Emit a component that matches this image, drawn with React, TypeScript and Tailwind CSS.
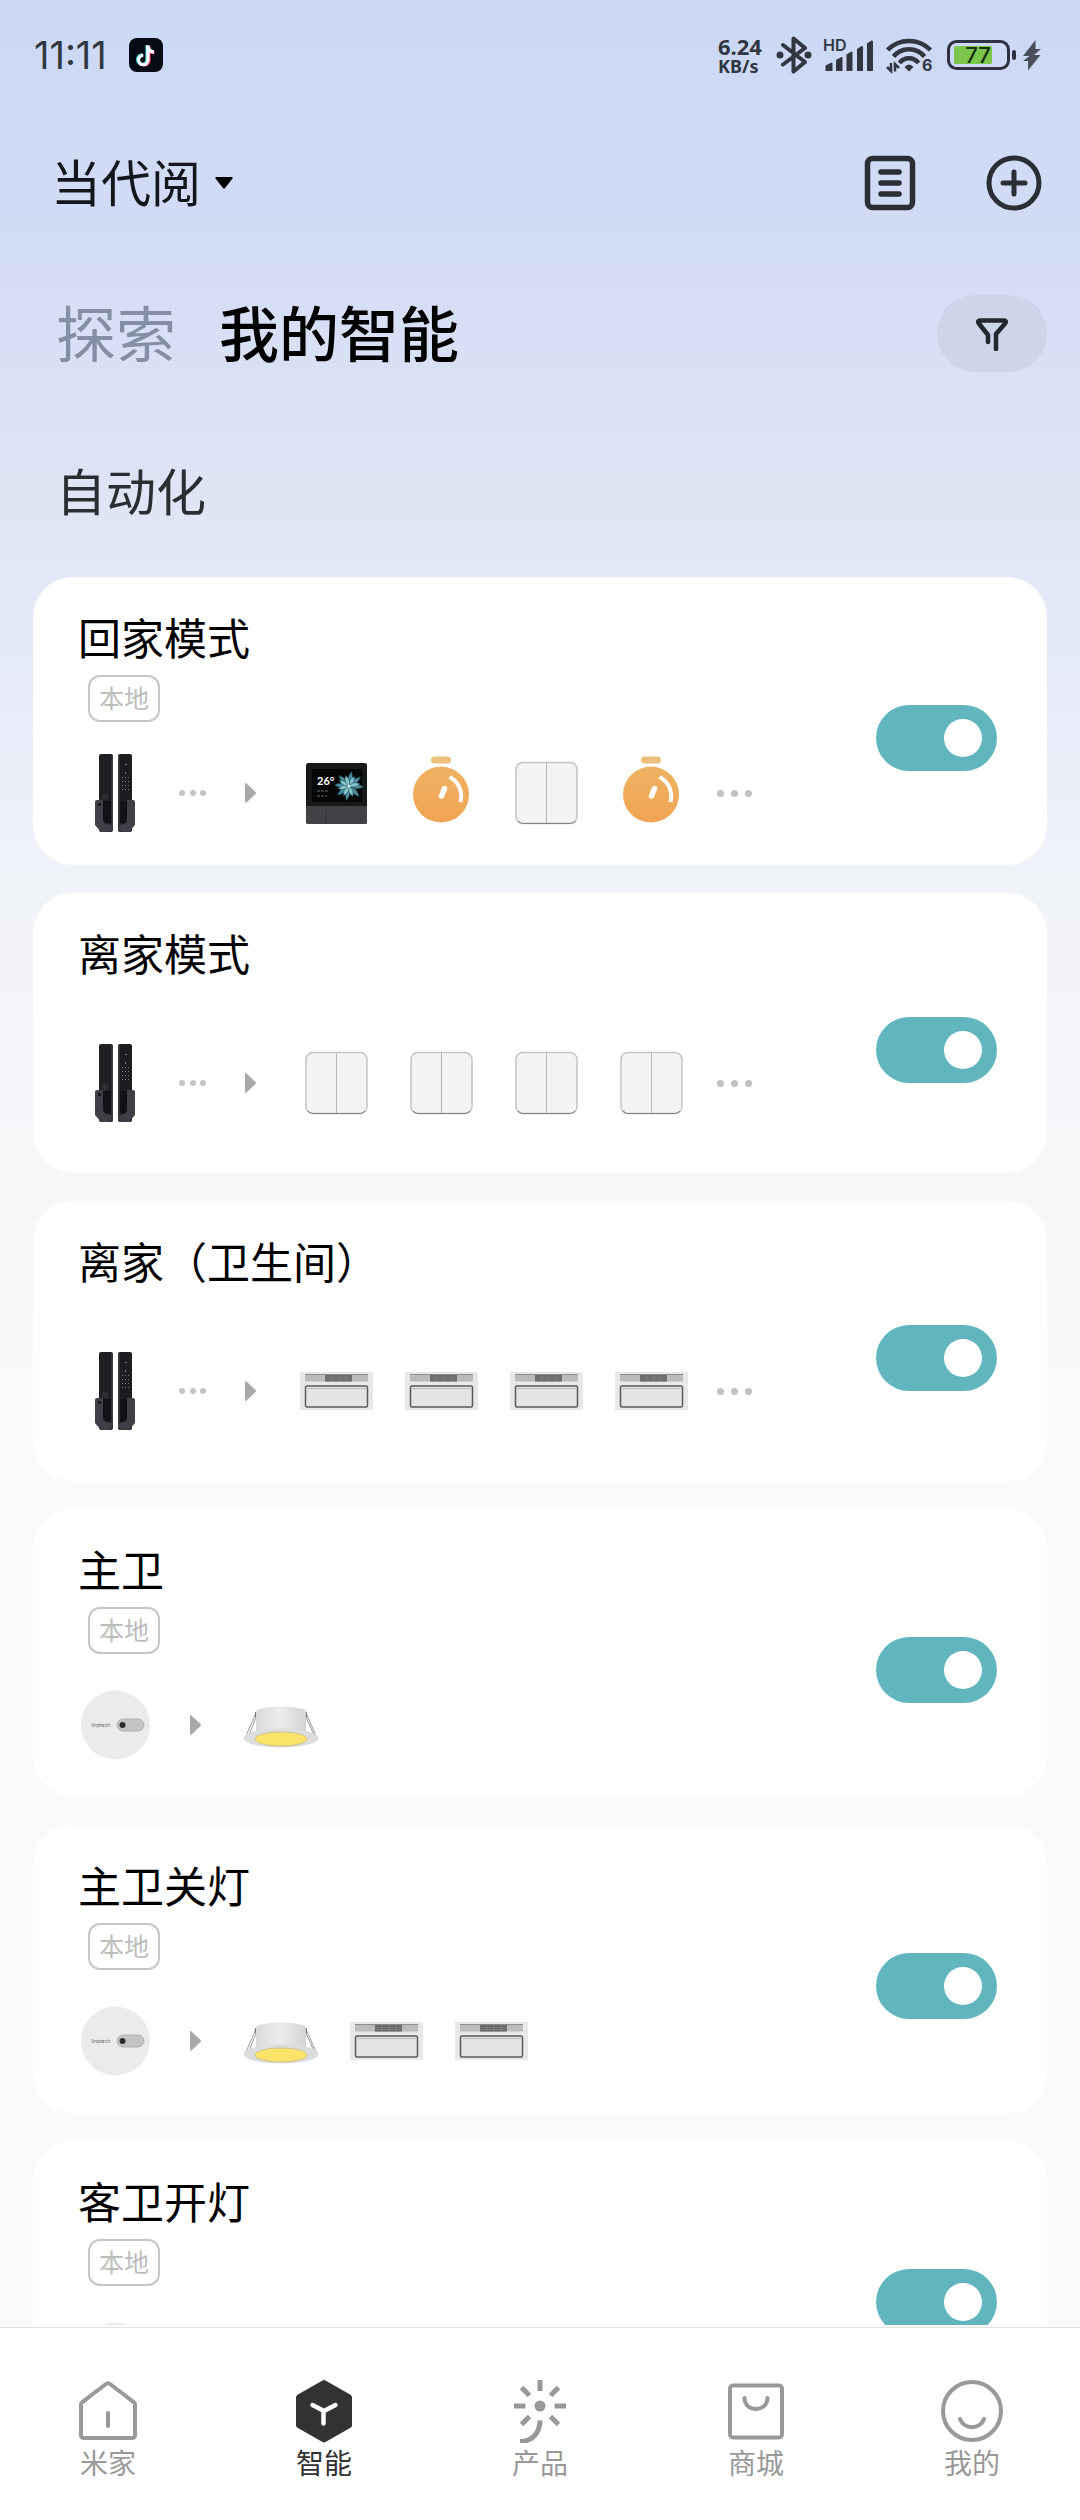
import type { ReactNode } from "react";

type Device = "lock" | "panel" | "timer" | "switch" | "fan" | "sensor" | "lamp";

interface Automation {
  name: string;
  local: boolean;
  trigger: Device;
  moreTriggers: boolean;
  actions: Device[];
  moreActions: boolean;
}

const automations: Automation[] = [
  { name: "回家模式", local: true, trigger: "lock", moreTriggers: true, actions: ["panel", "timer", "switch", "timer"], moreActions: true },
  { name: "离家模式", local: false, trigger: "lock", moreTriggers: true, actions: ["switch", "switch", "switch", "switch"], moreActions: true },
  { name: "离家（卫生间）", local: false, trigger: "lock", moreTriggers: true, actions: ["fan", "fan", "fan", "fan"], moreActions: true },
  { name: "主卫", local: true, trigger: "sensor", moreTriggers: false, actions: ["lamp"], moreActions: false },
  { name: "主卫关灯", local: true, trigger: "sensor", moreTriggers: false, actions: ["lamp", "fan", "fan"], moreActions: false },
  { name: "客卫开灯", local: true, trigger: "sensor", moreTriggers: false, actions: ["lamp"], moreActions: false },
];

function Frame({ children }: { children: ReactNode }) {
  return (
    <svg viewBox="0 0 84 84" className="size-[84px] shrink-0" aria-hidden="true">
      {children}
    </svg>
  );
}

function LockIcon() {
  return (
    <Frame>
      <rect x="26" y="3" width="14" height="78" rx="2" fill="#1f2024" />
      <rect x="38.4" y="4" width="1.6" height="76" fill="#3b3c42" />
      <rect x="45" y="3" width="14" height="78" rx="2" fill="#1c1d21" />
      <rect x="45" y="4" width="1.6" height="76" fill="#3b3c42" />
      <circle cx="32" cy="46" r="3" fill="#303136" />
      <path d="M24 49h6v20c0 2 1 3 3 4l6 1v4l-3 3h-8l-6-7V51a2 2 0 0 1 2-2z" fill="#3f4047" />
      <path d="M30 50h8v22h-5l-3-3z" fill="#111215" />
      <circle cx="26.5" cy="53.500" r="1.500" fill="#0c0c0e" />
      <path d="M60 49h-6v20c0 2-1 3-3 4l-5 1v4l2 3h8l6-7V51a2 2 0 0 0-2-2z" fill="#3f4047" />
      <path d="M47 50h7v19l-3 3h-4z" fill="#111215" />
      <g fill="#777980">
        <rect x="52" y="13" width="2" height="1" />
        <rect x="52" y="21" width="1" height="2" />
        {[26, 30, 34, 38].map((y) => (
          <g key={y}>
            <rect x="49" y={y} width="1" height="1" />
            <rect x="52" y={y} width="1" height="1" />
            <rect x="55" y={y} width="1" height="1" />
          </g>
        ))}
      </g>
    </Frame>
  );
}

function PanelIcon() {
  const outer = [10, 52, 94, 136, 190, 232, 274, 316];
  const inner = [30, 78, 160, 210, 256, 300, 342];
  return (
    <Frame>
      <rect x="12" y="12" width="61" height="61" rx="2.500" fill="#17181a" />
      <path d="M12 55h61v15.500a2.500 2.500 0 0 1-2.500 2.500h-56a2.500 2.500 0 0 1-2.500-2.500z" fill="#414246" />
      <path d="M32 56v16" stroke="#333438" strokeWidth="1" />
      <rect x="18" y="18" width="50" height="33" fill="#050607" />
      <g transform="translate(55 35)">
        {outer.map((a) => (
          <path key={a} d="M0 0C-3.500-5-3-9 0-15C3-9 3.500-5 0 0z" fill="#4b8d9d" stroke="#10242b" strokeWidth=".6" transform={`rotate(${a})`} />
        ))}
        {inner.map((a) => (
          <path key={a} d="M0 0C-3-4-2.500-7 0-11C2.500-7 3-4 0 0z" fill="#86c6cf" stroke="#1f4650" strokeWidth=".6" transform={`rotate(${a})`} />
        ))}
        <circle r="1.500" fill="#d5f2f2" />
      </g>
      <text x="23" y="34" fontSize="11" fontWeight="700" fontFamily="Lato, sans-serif" fill="#ffffff">26°</text>
      <path d="M23 40h11M23 45h10" stroke="#44474b" strokeWidth="1.500" strokeDasharray="3 1" />
    </Frame>
  );
}

function TimerIcon() {
  return (
    <Frame>
      <defs>
        <linearGradient id="timer-face" x1="0" y1="0" x2="0" y2="1">
          <stop offset="0" stopColor="#efb362" />
          <stop offset="1" stopColor="#f0a353" />
        </linearGradient>
      </defs>
      <rect x="32" y="5.500" width="20" height="7" rx="3.500" fill="#ecc07c" />
      <circle cx="42" cy="43.500" r="28" fill="url(#timer-face)" />
      <path d="M42.500 45L45.500 37.500" stroke="#ffffff" strokeWidth="5.500" strokeLinecap="round" />
      <path d="M50.500 26C59.500 30.500 64 40.500 61.500 51" fill="none" stroke="#ffffff" strokeWidth="4" />
    </Frame>
  );
}

function SwitchIcon() {
  return (
    <Frame>
      <rect x="12" y="11.500" width="61" height="61" rx="7" fill="#f4f4f4" stroke="#c4c4c4" strokeWidth="1.500" />
      <path d="M14 70q2 2.500 5 2.500h47q3 0 5-2.500" fill="none" stroke="#808080" strokeWidth="1.200" />
      <path d="M42.500 12v60" stroke="#b5b5b5" strokeWidth="1" />
    </Frame>
  );
}

function FanIcon() {
  return (
    <Frame>
      <rect x="6" y="23" width="73" height="38" fill="#e8e8e8" />
      <rect x="11" y="25.500" width="63" height="7" fill="#b9bbbd" />
      <path d="M11 25.500h63" stroke="#8c8e90" strokeWidth="1" />
      <rect x="31" y="26" width="27" height="6.500" fill="#626466" />
      <path d="M31 28.200h27M31 30.400h27M38 26v6.500M45 26v6.500M52 26v6.500" stroke="#8c8e90" strokeWidth=".6" />
      <rect x="11.500" y="37" width="62" height="21" rx="1.500" fill="#e4e4e4" stroke="#585a5c" strokeWidth="1.500" />
      <path d="M13 39.500h59" stroke="#bcbcbc" strokeWidth="1" />
    </Frame>
  );
}

function SensorIcon() {
  return (
    <Frame>
      <circle cx="42.500" cy="42" r="34.500" fill="#ebebeb" />
      <rect x="44" y="36" width="27" height="12" rx="6" fill="#c4c4c4" stroke="#b0b0b0" strokeWidth="1" />
      <circle cx="49.500" cy="42" r="3" fill="#2c2c2e" />
      <text x="18.500" y="43.500" fontSize="5" fontFamily="Inter, sans-serif" fill="#6a6a6a">linptech</text>
    </Frame>
  );
}

function LampIcon() {
  return (
    <Frame>
      <defs>
        <linearGradient id="lamp-body" x1="0" y1="0" x2="1" y2="0">
          <stop offset="0" stopColor="#dadada" />
          <stop offset=".5" stopColor="#ececec" />
          <stop offset="1" stopColor="#d3d3d3" />
        </linearGradient>
      </defs>
      <path d="M17 30L6 55M18 32L10 52M67 30L78 55M66 32L75 52" stroke="#9b9b9b" strokeWidth="1" />
      <path d="M17 29v5M67 29v5" stroke="#777" strokeWidth="2" />
      <path d="M17 28C22 22 62 22 67 28V48H17z" fill="url(#lamp-body)" />
      <ellipse cx="42" cy="55" rx="37.500" ry="9.500" fill="#dcdcdc" />
      <ellipse cx="42" cy="56" rx="26" ry="7" fill="#fbe36a" stroke="#c9bd83" strokeWidth=".8" />
    </Frame>
  );
}

function DeviceIcon({ kind }: { kind: Device }) {
  switch (kind) {
    case "lock":
      return <LockIcon />;
    case "panel":
      return <PanelIcon />;
    case "timer":
      return <TimerIcon />;
    case "switch":
      return <SwitchIcon />;
    case "fan":
      return <FanIcon />;
    case "sensor":
      return <SensorIcon />;
    case "lamp":
      return <LampIcon />;
  }
}

function AutomationCard({ item }: { item: Automation }) {
  return (
    <li className="flex items-center justify-between rounded-[40px] bg-white pr-[50px] pl-10">
      <div className={item.local ? "pt-[31px] pb-[30px]" : "pt-[31px] pb-12"}>
        <h3 className="pl-[5px] text-[43px] leading-[56px] font-normal text-black">{item.name}</h3>
        {item.local && (
          <span className="mt-[11px] ml-[15px] flex h-[47px] w-[72px] items-center justify-center rounded-xl border-2 border-[#c6c6c6] pb-[2px] text-[25px] leading-none text-[#bdbdbd]">
            本地
          </span>
        )}
        <div className={item.local ? "mt-[29px] flex items-center" : "mt-[61px] flex items-center"}>
          <DeviceIcon kind={item.trigger} />
          {item.moreTriggers && (
            <span className="mr-[6px] ml-[22px] flex w-[27px] justify-between">
              <i className="size-[6px] rounded-full bg-[#c4c4c4]" />
              <i className="size-[6px] rounded-full bg-[#c4c4c4]" />
              <i className="size-[6px] rounded-full bg-[#c4c4c4]" />
            </span>
          )}
          <svg viewBox="0 0 11 20" className="mr-[38px] ml-[33px] h-5 w-[11px]" aria-hidden="true">
            <path d="M0 1Q0-.500 1.500.500L10.500 9q1 1 0 2L1.500 19.500Q0 20.500 0 19z" fill="#a9a9a9" />
          </svg>
          <div className="flex gap-[21px]">
            {item.actions.map((kind, i) => (
              <DeviceIcon key={i} kind={kind} />
            ))}
          </div>
          {item.moreActions && (
            <span className="ml-6 flex w-[35px] justify-between">
              <i className="size-[7px] rounded-full bg-[#c1c1c1]" />
              <i className="size-[7px] rounded-full bg-[#c1c1c1]" />
              <i className="size-[7px] rounded-full bg-[#c1c1c1]" />
            </span>
          )}
        </div>
      </div>
      <div className="flex shrink-0 pt-[34px]">
        <input
          type="checkbox"
          role="switch"
          defaultChecked
          aria-label={item.name}
          className="h-[66px] w-[121px] cursor-pointer appearance-none rounded-full bg-[#d4d4d4] px-[15px] py-[14px] before:block before:size-[38px] before:rounded-full before:bg-white checked:bg-[#60b6bc] checked:before:translate-x-[53px]"
        />
      </div>
    </li>
  );
}

function StatusBar() {
  return (
    <div className="flex h-[110px] items-center justify-between pr-[38px] pl-[34px] text-[#303741]">
      <div className="flex items-center gap-[22px]">
        <span className="font-['Inter'] text-[38px] leading-none">11:11</span>
        <svg viewBox="0 0 34 34" className="size-[34px]" aria-hidden="true">
          <rect width="34" height="34" rx="8" fill="#060a14" />
          <g fill="none" strokeWidth="3.200">
            <path d="M18 7v14.500a4.700 4.700 0 1 1-4.700-4.700M18 8c.5 3.500 3 5.500 6.500 5.800" stroke="#3de3e0" />
            <path d="M20 8.500v14a4.700 4.700 0 0 1-7.500 3.500M20 9.500c.5 3.500 3 5.200 5.500 5.500" stroke="#f0325c" />
            <path d="M19 7.500v14.500a4.700 4.700 0 1 1-4.700-4.700M19 8.500c.5 3.500 3 5.300 6 5.600" stroke="#ffffff" />
          </g>
        </svg>
      </div>
      <div className="flex items-center gap-[10px]">
        <div className="flex w-12 flex-col whitespace-nowrap font-['Noto_Sans'] font-bold">
          <span className="text-[22px] leading-[22px]">6.24</span>
          <span className="text-[18px] leading-[18px]">KB/s</span>
        </div>
        <svg viewBox="0 0 36 38" className="h-[38px] w-9" aria-hidden="true">
          <path d="M7 9L29 26 17.500 35.500V2.500L29 12 7 28.500" fill="none" stroke="currentColor" strokeWidth="4" strokeLinecap="round" strokeLinejoin="round" />
          <circle cx="4" cy="19" r="3.500" fill="currentColor" />
          <circle cx="32" cy="19" r="3.500" fill="currentColor" />
        </svg>
        <svg viewBox="0 0 54 40" className="h-10 w-[54px]" aria-hidden="true" fill="currentColor">
          <text x="1" y="16" fontSize="16" fontWeight="600" fontFamily="Inter, sans-serif">HD</text>
          <path d="M3.500 30.500l6-3q1 0 1 1V36h-7zM14 25l5.500-3q1 0 1 1v13H14zM24.500 19.500l5-3q1 0 1 1V36h-6zM35 14l4.500-3q1.500 0 1.500 1v24h-6zM45 8.500l4.500-3q1.500 0 1.500 1V36h-6z" />
        </svg>
        <svg viewBox="0 0 50 40" className="h-10 w-[50px]" aria-hidden="true">
          <g fill="none" stroke="currentColor" strokeWidth="4.500">
            <path d="M1.500 15A30 30 0 0 1 44.500 15" />
            <path d="M7.500 21.500A20 20 0 0 1 38.500 21.500" />
            <path d="M13.500 28A12 12 0 0 1 32.500 28" />
          </g>
          <path d="M18.500 32q4.500-5 9 0L23 36.500z" fill="currentColor" />
          <path d="M1 32l4 4V28M9 36.500V29l4 4" fill="none" stroke="currentColor" strokeWidth="2.500" />
          <text x="36" y="36" fontSize="16" fontWeight="700" fontFamily="Inter, sans-serif" fill="currentColor">6</text>
        </svg>
        <div className="flex items-center gap-1">
          <svg viewBox="0 0 72 32" className="h-8 w-[72px]" aria-hidden="true">
            <rect x="2.500" y="2.500" width="60" height="27" rx="8" fill="none" stroke="#2e3142" strokeWidth="3" />
            <rect x="8" y="7" width="38" height="18" rx="1.500" fill="#7cc64c" />
            <rect x="66" y="11" width="4" height="10" rx="2" fill="#2e3142" />
            <text x="32" y="24" textAnchor="middle" fontSize="22" fontWeight="500" fontFamily="Inter, sans-serif" fill="#16320c">77</text>
          </svg>
          <svg viewBox="0 0 20 32" className="h-8 w-5" aria-hidden="true">
            <path d="M13.500 1L1 17h6.500L1 22h5L6 31.500 18.500 16H12l7-6h-5.500z" fill="#4a4f5c" />
          </svg>
        </div>
      </div>
    </div>
  );
}

const tabs: { label: string; icon: ReactNode; active?: boolean }[] = [
  {
    label: "米家",
    icon: (
      <g fill="none" stroke="currentColor" strokeWidth="4" strokeLinejoin="round" strokeLinecap="round">
        <path d="M5 25.500q0-1.500 1-2.200L30 5q2-1.500 4 0l24 18.300q1 .7 1 2.200V56q0 3-3 3H8q-3 0-3-3z" />
        <path d="M32 34v13" />
      </g>
    ),
  },
  {
    label: "智能",
    active: true,
    icon: (
      <>
        <path d="M30.500 1.400q1.500-.8 3 0l25 14.300q1.500 1 1.500 2.500v28q0 1.500-1.500 2.500l-25 14.400q-1.500.8-3 0L5.500 48.700Q4 47.700 4 46.200v-28q0-1.500 1.500-2.500z" fill="#333333" />
        <path d="M20.500 26L32 32l11.500-6M31.500 33v11.500" fill="none" stroke="#ffffff" strokeWidth="4.500" strokeLinecap="round" />
      </>
    ),
  },
  {
    label: "产品",
    icon: (
      <g fill="none" stroke="currentColor" strokeWidth="5">
        <path d="M32 1v11M6 27h11.500M46.500 27H58M13.500 8.500l8 8M50.500 8.500l-8 8M13.500 45.500l8-8M50.500 45.500l-8-8M32 41.500C32 54 24 62.500 12 62.500" />
        <circle cx="32" cy="27" r="5.500" fill="currentColor" stroke="none" />
      </g>
    ),
  },
  {
    label: "商城",
    icon: (
      <g fill="none" stroke="currentColor" strokeWidth="4" strokeLinecap="round">
        <rect x="6" y="6.500" width="52" height="52" rx="3" />
        <path d="M20.500 19C20.500 33.500 43.500 33.500 43.500 19" />
      </g>
    ),
  },
  {
    label: "我的",
    icon: (
      <g fill="none" stroke="currentColor" strokeWidth="4" strokeLinecap="round">
        <circle cx="32" cy="32" r="29" />
        <path d="M20 40C24 51 40 51 44 40" />
      </g>
    ),
  },
];

export default function App() {
  return (
    <div className="flex h-screen flex-col bg-[linear-gradient(180deg,#cbd8f5_0px,#d3dcf5_260px,#d8e1f4_360px,#dde3f4_460px,#e3e9f7_600px,#eaedf9_740px,#f0f3f8_880px,#f7f7fa_1160px,#fafafa_1400px)] font-['Noto_Sans_CJK_SC',sans-serif]">
      <header>
        <StatusBar />
        <div className="flex h-[146px] items-center justify-between pr-[38px] pl-[51px]">
          <button type="button" className="flex items-center gap-[14px] text-[50px] leading-none text-[#11171b]">
            <span className="pb-[6px]">当代阅</span>
            <svg viewBox="0 0 18 12" className="h-3 w-[18px]" aria-hidden="true">
              <path d="M1 0h16q1 .5.500 1.500L10 11q-1 1-2 0L.500 1.500Q0 .500 1 0z" fill="#000000" />
            </svg>
          </button>
          <div className="flex items-center gap-[70px] text-[#2a2e35]">
            <button type="button" aria-label="日志">
              <svg viewBox="0 0 52 56" className="block h-14 w-[52px]" fill="none" stroke="currentColor" strokeWidth="5.500" aria-hidden="true">
                <rect x="3.500" y="3.500" width="45" height="49" rx="5" />
                <path d="M17 17h18M17 28h18M17 39h18" strokeLinecap="round" />
              </svg>
            </button>
            <button type="button" aria-label="添加">
              <svg viewBox="0 0 56 56" className="block size-14" fill="none" stroke="currentColor" strokeWidth="5" aria-hidden="true">
                <circle cx="28" cy="28" r="25" />
                <path d="M17 28h22M28 17v22" strokeLinecap="round" />
              </svg>
            </button>
          </div>
        </div>
        <div className="flex h-[155px] items-center justify-between pr-[33px] pl-14">
          <div className="flex gap-[43px] pb-[6px] text-[60px] leading-none">
            <button type="button" className="text-[#858fa3]">探索</button>
            <button type="button" className="font-medium text-black">我的智能</button>
          </div>
          <button type="button" aria-label="筛选" className="flex h-[77px] w-[110px] items-center justify-center rounded-full bg-[#cdd6e8] text-[#23272f]">
            <svg viewBox="0 0 34 34" className="size-[34px]" fill="none" stroke="currentColor" strokeWidth="4.500" strokeLinecap="round" strokeLinejoin="round" aria-hidden="true">
              <path d="M13 25v-7L3.500 6q-1-2.500 1.500-2.500h24Q31.500 3.500 30.500 6L21 17v15" />
            </svg>
          </button>
        </div>
      </header>
      <main className="min-h-0 flex-1 overflow-y-auto px-[33px] [scrollbar-width:none]">
        <h2 className="pt-12 pb-[58px] pl-[23px] text-[50px] leading-[60px] text-[#2a2e33]">自动化</h2>
        <ul className="flex flex-col gap-7 pb-7">
          {automations.map((item) => (
            <AutomationCard key={item.name} item={item} />
          ))}
        </ul>
      </main>
      <nav className="mt-[2px] grid shrink-0 grid-cols-5 border-t border-[#e0e3e3] bg-white pt-[51px] pb-[39px]">
        {tabs.map((tab) => (
          <a
            key={tab.label}
            href="#"
            aria-current={tab.active ? "page" : undefined}
            className={tab.active ? "flex flex-col items-center text-[#333333]" : "flex flex-col items-center text-[#999999]"}
          >
            <svg viewBox="0 0 64 64" className="size-16" aria-hidden="true">
              {tab.icon}
            </svg>
            <span className="text-[28px] leading-[38px]">{tab.label}</span>
          </a>
        ))}
      </nav>
    </div>
  );
}
